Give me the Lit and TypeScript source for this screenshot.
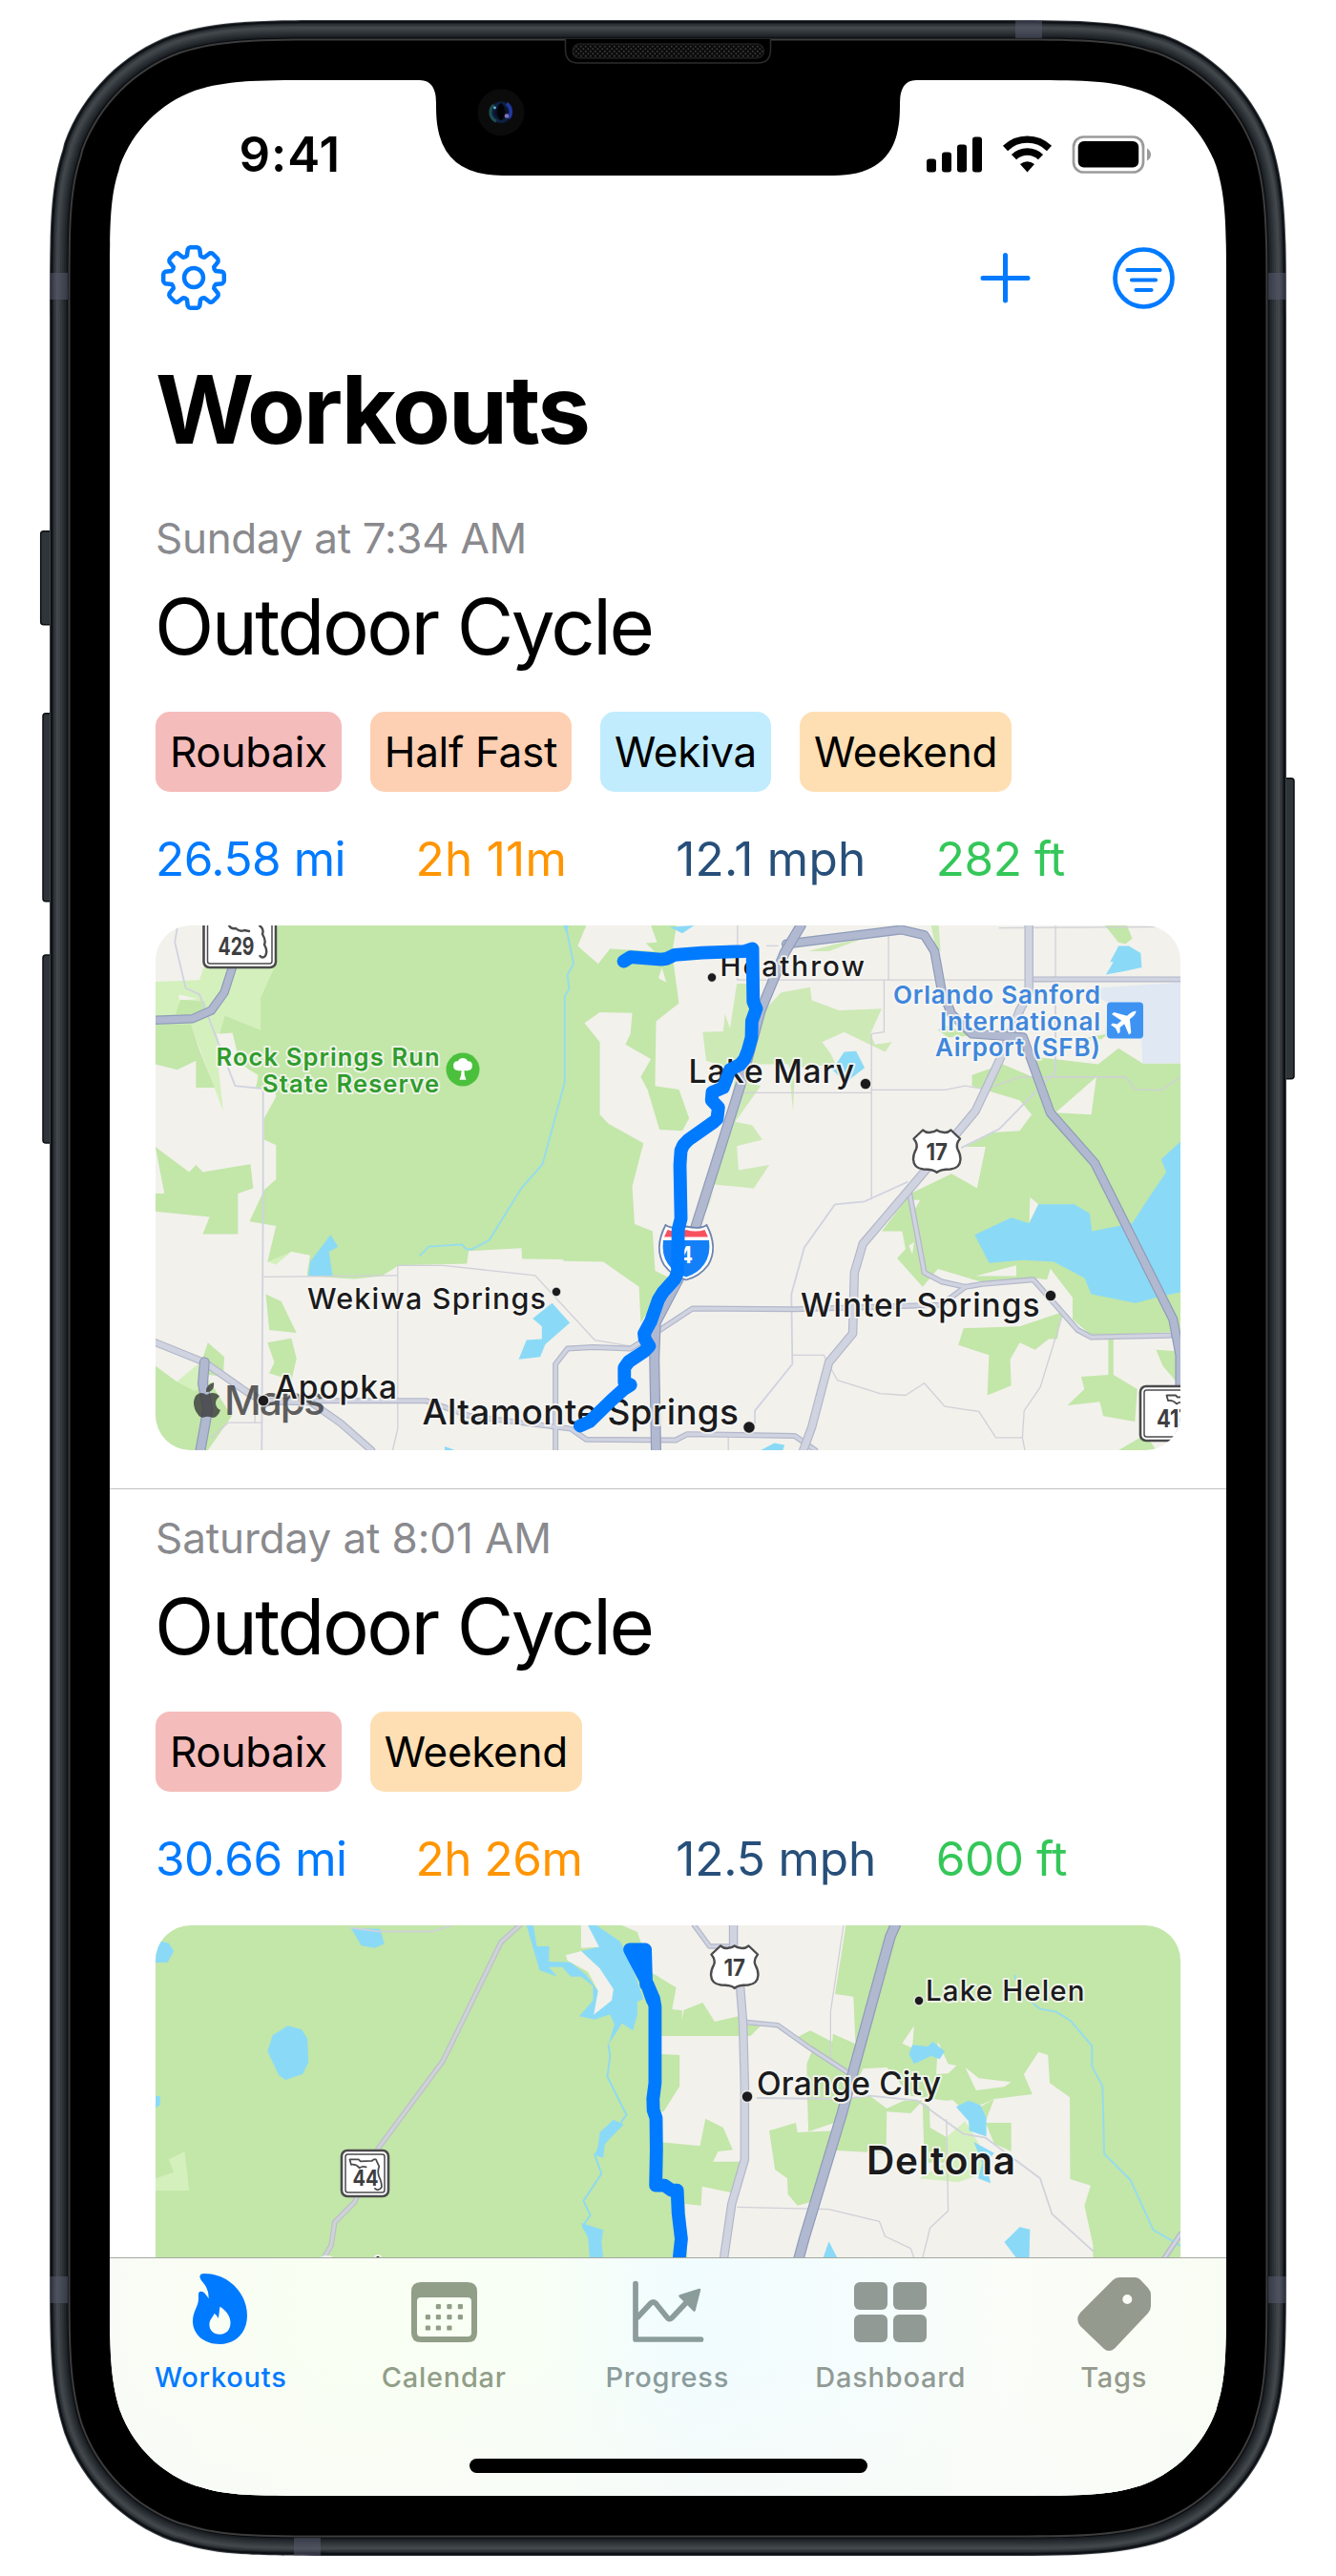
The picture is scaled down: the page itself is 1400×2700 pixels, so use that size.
import { LitElement, html, svg, css } from "lit";
import { customElement, property } from "lit/decorators.js";

/** Rounded rectangle with continuous (superelliptic) corners. */
function squircle(x: number, y: number, w: number, h: number, r: number): string {
  const k = [1.52866483, 1.08849323, 0.86840689, 0.66993427, 0.065496, 0.63149399, 0.074911, 0.37282392, 0.16905899].map((v) => v * r);
  const [a, b, c, d, e, f, g, i, j] = k;
  const X = x + w;
  const Y = y + h;
  return [
    `M${x + a} ${y}H${X - a}`,
    `C${X - b} ${y} ${X - c} ${y} ${X - d} ${y + e}L${X - f} ${y + g}`,
    `C${X - i} ${y + j} ${X - j} ${y + i} ${X - g} ${y + f}`,
    `C${X} ${y + c} ${X} ${y + b} ${X} ${y + a}V${Y - a}`,
    `C${X} ${Y - b} ${X} ${Y - c} ${X - e} ${Y - d}L${X - g} ${Y - f}`,
    `C${X - j} ${Y - i} ${X - i} ${Y - j} ${X - f} ${Y - g}`,
    `C${X - c} ${Y} ${X - b} ${Y} ${X - a} ${Y}H${x + a}`,
    `C${x + b} ${Y} ${x + c} ${Y} ${x + d} ${Y - e}L${x + f} ${Y - g}`,
    `C${x + i} ${Y - j} ${x + j} ${Y - i} ${x + g} ${Y - f}`,
    `C${x} ${Y - c} ${x} ${Y - b} ${x} ${Y - a}V${y + a}`,
    `C${x} ${y + b} ${x} ${y + c} ${x + e} ${y + d}L${x + g} ${y + f}`,
    `C${x + j} ${y + i} ${x + i} ${y + j} ${x + f} ${y + g}`,
    `C${x + c} ${y} ${x + b} ${y} ${x + a} ${y}Z`,
  ].join("");
}

const poly = (fill: string, ...shapes: string[]) =>
  shapes.map((s) => svg`<polygon points=${s} fill=${fill} />`);
const line = (color: string, width: number, ...shapes: string[]) =>
  shapes.map(
    (s) => svg`<polyline points=${s} fill="none" stroke=${color} stroke-width=${width}
      stroke-linejoin="round" stroke-linecap="round" vector-effect="non-scaling-stroke" />`,
  );
const road = (edge: string, core: string, width: number, ...shapes: string[]) => [
  line(edge, width, ...shapes),
  line(core, width - 2.4, ...shapes),
];

const GREEN = "#c3e6a9";
const LIGHT = "#d4f0bc";
const LAND = "#f2f1ec";
const WATER = "#8adaf7";
const motorway = (w: number, ...s: string[]) => road("#8f9bb9", "#b0b9d0", w, ...s);
const street = (w: number, ...s: string[]) => road("#b3b7c9", "#d0d3e0", w, ...s);
const minor = (...s: string[]) => line("#d0d0d8", 1.3, ...s);

interface Label {
  t: string; x: number; y: number; w: number; s: number; weight?: number; c?: string;
}
const label = (l: Label) => svg`<text x=${l.x} y=${l.y} font-size=${l.s} textLength=${l.w}
  font-weight=${l.weight ?? 500} fill=${l.c ?? "#1b1b1d"} class="halo">${l.t}</text>`;
const dot = (x: number, y: number, r: number) =>
  svg`<circle cx=${x} cy=${y} r=${r} fill="#1b1b1d" stroke="#f7f7f4" stroke-width="1.6" stroke-opacity=".8" />`;

const usShield = (x: number, y: number) => svg`
  <g transform="translate(${x} ${y})">
    <path d="M11 1.5Q15 4.8 19 3.8Q23 3.6 25.7 1.5Q28.5 3.6 32.5 3.8Q36.500 4.800 40.500 1.500L50 10.500Q45.500 16 47.300 21Q50.500 27 50.500 32Q50 41.500 40 42.500Q29 42.500 25.700 46Q22.500 42.500 11.500 42.500Q1.500 41.500 1 32Q1 27 4.200 21Q6 16 1.500 10.500Z"
      fill="#fff" stroke="#4b4b4d" stroke-width="2.4" stroke-linejoin="round" />
    <text x="14.500" y="32.500" font-size="24" font-weight="700" textLength="22.500" lengthAdjust="spacingAndGlyphs" fill="#3e3e40">17</text>
  </g>`;

const stateShield = (x: number, y: number, w: number, h: number) => svg`
  <rect x=${x + 1} y=${y + 1} width=${w - 2} height=${h - 2} rx="6" fill="#fff" stroke="#4b4b4d" stroke-width="2.600" />
  <rect x=${x + 5} y=${y + 5} width=${w - 10} height=${h - 10} rx="2.500" fill="none" stroke="#4b4b4d" stroke-width="1.500" />`;

const florida = (x: number, y: number, s: number) => svg`
  <path transform="translate(${x} ${y}) scale(${s})" fill="none" stroke="#4b4b4d" stroke-width="1.800" stroke-linejoin="round" stroke-linecap="round"
    d="M18 8.500Q14 7 11 9.500Q7 5 2 6L0.500 0.500H10L12 2.500L24 2Q27 -0.500 28.500 0.500L32 8Q30 12 31.500 18Q35 25 34.500 30Q31 35 27.500 31.500" />`;

const mapOne = () => html`
  <svg class="map-art" viewBox="0 0 1074 550">
    <rect width="1074" height="550" fill=${LAND} />
    <g transform="translate(-13 -20) scale(.357143 .376280)">
      ${poly(LIGHT, "36,210 165,205 185,150 380,60 420,53 420,520 330,505 262,352 225,355 215,400 235,570 140,330 36,330")}
      ${poly(LAND, "105,245 160,258 105,262", "215,355 262,350 285,440 335,470 335,505 260,500 240,420")}
      ${poly(
        GREEN,
        "395,53 1300,53 1275,110 1335,160 1370,118 1500,125 1475,102 1508,100 1490,53 1565,53 1552,130 1572,270 1505,320 1502,500 1572,510 1602,590 1582,625 1515,622 1480,510 1460,475 1490,425 1415,385 1430,355 1435,297 1340,295 1295,325 1340,378 1340,580 1365,605 1468,660 1435,780 1442,885 1495,905 1502,1015 1545,1035 1460,1160 1455,1060 1350,990 1235,988 1230,983 1112,982 1110,952 955,960 950,995 750,1000 700,1030 620,1038 480,1030 490,972 435,962 395,985 365,990 390,890 312,878 355,790 390,760 390,665 355,650 355,590 390,530 385,500 330,505 340,470 285,440 262,352 225,355 240,305 345,345 345,255 395,150",
        "36,330 140,328 165,400 210,505 155,505 155,430 100,455 36,440",
        "110,260 180,265 190,300 95,300",
        "36,670 135,740 155,720 175,740 315,718 323,785 278,800 278,913 175,913 195,865 36,850 36,800 62,800",
        "360,1080 405,1100 450,1188 370,1180",
        "365,1215 435,1203 450,1260 435,1320 370,1300 385,1270",
        "190,1215 238,1255 235,1310 160,1300",
        "36,1280 100,1325 130,1300 200,1330 260,1420 190,1515 36,1515",
      )}
      ${poly(LAND, "36,800 36,680 62,800", "480,972 435,962 395,985 360,1030 482,1030", "1512,200 1535,212 1522,170")}
      ${poly(LIGHT, "365,990 435,962 390,998", "100,1325 160,1275 200,1330 150,1350")}
      ${poly(WATER,
        "485,1030 490,990 550,915 572,948 545,962 556,1030",
        "1200,1105 1252,1160 1180,1220 1165,1255 1102,1262 1125,1208 1170,1205 1170,1170 1143,1148",
        "885,1504 915,1515 885,1515", "1233,53 1248,53 1242,75", "1545,58 1617,53 1582,75")}
      ${line("#93dcf0", 1.8, "1240,53 1263,160 1245,190 1250,230 1237,250 1237,490 1172,718 1110,785 1015,930 965,955 948,955 935,942 838,948 812,973")}
      ${line("#d0d2e0", 1.8, "100,60 93,100 125,228 165,245 270,500 352,508 352,790 348,1515")}
      ${minor("355,1032 747,1028", "747,1000 747,1455 732,1515", "747,1000 880,1000 1150,1028 1325,1208 1430,1225", "200,1480 250,1438 348,1438", "328,1380 328,1438")}
      <g transform="translate(1512 0)">
        ${poly(
          "#cde9b6",
          "230,215 290,215 262,420 240,460 140,430 130,350 190,348 195,300 210,340",
          "300,300 360,240 445,225 450,262 530,290 655,285 622,355 635,385 685,378 665,405 545,350 480,378 505,410 520,440 400,450 395,570 382,440 265,440",
          "225,480 300,500 225,600 275,610 305,650 230,668 235,735 325,720 280,785 165,775",
          "440,125 520,105 600,90 500,125", "800,53 822,53 828,125 812,110",
          "165,790 140,850 130,860",
        )}
        ${poly(
          GREEN,
          "920,470 1010,440 1110,480 1110,420 1290,440 1350,395 1420,437 1532,437 1532,1185 1270,1195 1215,1150 1215,1090 1150,1010 1140,1040 1100,1035 960,1050 820,1010 775,1060 700,980 725,955 715,905 655,905 740,800 860,745 935,785 960,670 900,670 980,630 1060,625 1095,580 1060,540 920,500",
          "895,1175 1060,1170 1185,1130 1170,1205 1145,1205 1105,1235 1060,1215 1032,1262 1035,1335 965,1362 970,1250 880,1222",
          "1320,1205 1335,1205 1335,1305 1405,1345 1398,1435 1305,1420 1295,1380 1200,1390 1250,1345 1240,1310 1320,1305",
          "1460,1235 1532,1240 1520,1325 1480,1280", "1350,1515 1430,1470 1460,1515",
          "1310,53 1375,53 1390,90 1370,105 1350,100", "1230,370 1320,355 1300,370",
          "840,330 920,360 850,365 820,345",
        )}
        ${poly("#dfe8f3", "1250,230 1532,212 1532,437 1420,437 1418,370 1310,360 1320,270")}
        ${poly(LAND, "1165,575 1285,475 1270,580", "1090,810 1115,830 1088,880", "930,1030 1050,1000 1050,1030", "735,818 768,818 755,840", "735,945 750,935 745,970", "1150,1010 1215,1090 1215,1150 1160,1100")}
        ${poly(
          WATER,
          "928,915 1035,867 1088,883 1115,830 1220,830 1265,855 1272,905 1390,883 1440,810 1490,740 1475,705 1532,655 1532,1075 1480,1085 1400,1105 1270,1080 1250,1035 1160,990 1070,985 970,993",
          "1313,190 1335,155 1325,155 1350,110 1380,110 1415,130 1418,170 1370,180",
          "510,455 545,405 580,403 605,450 550,490", "300,1515 340,1495 370,1500 365,1515",
        )}
        ${minor(
          "232,53 232,205 1080,205", "675,80 675,205", "662,205 662,350 625,355 625,815", "240,519 625,519",
          "625,511 840,511 900,500 960,510 1060,475 1370,475 1400,510 1475,512 1532,475",
          "393,1250 485,1250 525,1320 650,1357 725,1362 780,1328 840,1393 940,1407 990,1480 1068,1480",
          "1185,1140 1120,1340 1073,1405 1068,1480 1075,1515", "1000,60 1532,57", "1165,53 1165,200", "205,1480 205,1515",
          "318,110 350,110",
        )}
        ${line("#d0d2e0", 1.8, "730,768 605,822 518,830 428,950 390,1080 393,1275 283,1405 283,1440", "1165,205 1165,460 1000,620 890,672")}
        ${street(6, "-302,1515 -302,1275 -267,1232 -192,1228 -82,1232 -20,1195 100,1120 400,1122 830,1110 900,1060", "1095,203 1532,203",
          "735,790 780,1020 830,1045 900,1060 950,1052 1100,1040 1230,1180 1270,1200 1500,1195",
          "-1030,1377 -682,1377 -552,1420 -302,1450 -257,1455 -212,1485 50,1487 85,1470 400,1475 460,1515")}
        ${street(9.5, "1060,290 1000,430 930,570 860,650 600,940 575,1020 570,1190 500,1270 450,1450 425,1515", "1087,53 1087,240 1060,290")}
        ${motorway(10, "375,105 712,65 780,80 810,125 830,230 860,300 920,355 1070,365 1150,575 1280,715 1510,1150 1530,1250 1530,1500")}
        ${motorway(11, "418,53 370,130 300,290 240,500 110,890 75,1010 -8,1160 -12,1260 -7,1515")}
      </g>
      ${street(8, "36,1215 180,1270 300,1350 350,1378 490,1380 580,1440 670,1515")}
      ${motorway(9.500, "36,317 145,313 200,290 238,240 265,160")}
      ${motorway(11, "168,1515 190,1400 175,1330 180,1270")}
    </g>

    ${stateShield(49.5, -20, 77.500, 65)}
    <path d="M77 0Q79 4 84 3Q88 7 93 5L98 6M109 0Q114 4 112 9Q116 16 114 20Q118 27 115 32Q112 35 109.500 32" fill="none" stroke="#4b4b4d" stroke-width="2.400" stroke-linecap="round" />
    <text x="65.500" y="31" font-size="26" font-weight="700" textLength="38" lengthAdjust="spacingAndGlyphs" fill="#3e3e40">429</text>
    ${stateShield(1031, 482, 80, 59)}
    ${florida(1059, 492, 1)}
    <text x="1049" y="526" font-size="26" font-weight="700" textLength="36" lengthAdjust="spacingAndGlyphs" fill="#3e3e40">417</text>
    ${usShield(793, 213)}
    <path d="M534.500 314Q541 319 556 315.500Q571 319 577.500 314Q590 338 579 356Q570 368 556 371.500Q542 368 533 356Q522 338 534.500 314Z" fill="#fff" stroke="#6f84ad" stroke-width="1.800" />
    <path d="M536.500 319Q546 322 556 319Q566 322 575.500 319L579 326.500H533Z" fill="#f9505f" />
    <path d="M532 330H580Q582 345 575 355Q568 365 556 368.500Q544 365 537 355Q530 345 532 330Z" fill="#1480f8" />
    <text x="548.500" y="353.500" font-size="24" font-weight="700" textLength="14.500" lengthAdjust="spacingAndGlyphs" fill="#fff">4</text>

    ${label({ t: "Rock Springs Run", x: 63.500, y: 147, w: 234, s: 25.5, weight: 600, c: "#2f9c2c" })}
    ${label({ t: "State Reserve", x: 112, y: 174.5, w: 185, s: 25.5, weight: 600, c: "#2f9c2c" })}
    <circle cx="322" cy="151" r="17.500" fill="#4bc03c" />
    <path d="M322 139a5.500 4.500 0 0 1 5 3.200a4.300 4.300 0 0 1 4.800 5.300a3.800 3.800 0 0 1-3.800 4.200a5 5 0 0 1-4.500 0q-.3 5.500 2 10h-7q2.300-4.500 2-10a5 5 0 0 1-4.500 0a3.800 3.800 0 0 1-3.800-4.200a4.300 4.300 0 0 1 4.800-5.300a5.500 4.500 0 0 1 5-3.200z" fill="#fff" />
    ${label({ t: "Wekiwa Springs", x: 159, y: 402, w: 250, s: 30.5 })}
    ${dot(420, 384, 5)}
    <g fill="#3c3c3c" fill-opacity=".82">
      <path d="M61 479q1 5-2.500 8.500q-2.500 2-5.500 1.500q-.5-4 2.500-7q2.500-2.600 5.500-3zM53.500 492q3.500-2.500 7-2q4.500.5 6.500 3.800q-4 2.700-4 7.200q.3 5 5 7q-1.500 4.200-4.500 6.800q-2.300 1.800-5 .7q-4-1.600-8 0q-2.700.8-5-1.400q-6-7-5.500-15q1-8.500 8-9.100q2.800 0 5.500 2z" />
      <text x="72" y="512.500" font-size="42.500" font-weight="500" textLength="106">Maps</text>
    </g>
    ${label({ t: "Apopka", x: 125, y: 496, w: 128, s: 33.5 })}
    ${dot(113, 498, 6)}
    ${label({ t: "Altamonte Springs", x: 279.500, y: 523, w: 331.500, s: 37 })}
    ${dot(622, 526, 6.5)}
    ${label({ t: "Heathrow", x: 591.500, y: 53, w: 151.500, s: 29.5 })}
    ${dot(583, 54.5, 5)}
    ${label({ t: "Lake Mary", x: 558.500, y: 165, w: 173.500, s: 33.5 })}
    ${dot(744, 166, 6)}
    ${label({ t: "Winter Springs", x: 676, y: 409.500, w: 250.500, s: 33.5 })}
    ${dot(938, 388, 6)}
    ${label({ t: "Orlando Sanford", x: 773, y: 82, w: 217, s: 26, weight: 600, c: "#3f87dc" })}
    ${label({ t: "International", x: 822, y: 109.500, w: 168, s: 26, weight: 600, c: "#3f87dc" })}
    ${label({ t: "Airport (SFB)", x: 817, y: 137, w: 173, s: 26, weight: 600, c: "#3f87dc" })}
    <rect x="997" y="80.500" width="38" height="38" rx="4" fill="#3e93f2" />
    <path transform="translate(1016 99.500) rotate(50)" fill="#fff" d="M0-15Q2.300-13 2.300-8V-4.500L14 3.500V6.500L2.300 3V9L6 12V14.500L0 13L-6 14.500V12L-2.300 9V3L-14 6.500V3.500L-2.300-4.500V-8Q-2.300-13 0-15Z" />

    <g transform="translate(-13 -20) scale(.357143 .376280)">
      ${line("#007aff", 13.8, "1410,153 1430,141 1520,148 1535,146 1560,135 1640,129 1765,125 1788,118 1790,265 1799,285 1786,320 1785,365 1775,400 1765,425 1752,440 1722,455 1702,505 1670,518 1668,540 1688,560 1684,592 1675,600 1600,650 1585,665 1578,680 1575,720 1578,870 1570,900 1568,1020 1560,1038 1525,1075 1512,1095 1490,1155 1470,1190 1472,1205 1485,1225 1470,1240 1425,1268 1412,1285 1412,1325 1430,1333 1410,1345 1375,1375 1310,1435 1282,1447")}
    </g>
  </svg>
`;

const mapTwo = () => html`
  <svg class="map-art" viewBox="0 0 1074 550">
    <rect width="1074" height="550" fill=${GREEN} />
    <g transform="translate(-13 -18) scale(.357143 .333333)">
      ${poly(LIGHT, "75,790 122,765 135,888 36,888 36,850 90,830")}
      ${poly(WATER,
        "610,62 695,65 708,112 680,125 640,118", "36,100 75,110 90,135 72,170 36,172",
        "380,400 425,370 465,382 482,410 485,485 468,522 418,540 398,525 365,450", "36,590 50,592 50,618 36,628",
        "1125,54 1145,54 1155,120 1192,120 1190,168 1255,170 1300,210 1335,260 1330,300 1380,330 1325,350 1280,340 1320,290 1320,245 1285,215 1255,215 1230,185 1190,185 1215,215 1163,195",
        "1305,54 1330,54 1400,105 1440,200 1468,285 1450,295 1450,335 1437,385 1405,362 1365,430 1383,365 1365,325 1335,320 1340,190 1285,135 1335,122",
        "1380,665 1410,680 1355,740 1350,785 1328,778 1335,745 1340,705",
        "1285,990 1350,1012 1345,1050 1350,1100 1310,1100 1305,1030")}
      ${poly(LAND, "1240,148 1285,135 1340,190 1380,255 1375,290 1322,335 1335,260 1305,200 1245,165", "1285,54 1305,54 1338,122 1285,125")}
      ${line("#8adaf7", 1.8, "1365,430 1370,465 1362,530 1418,650 1385,700 1325,775 1345,835 1292,920 1312,965 1290,1000 1310,1040 1340,1100")}
      ${line("#d0d0dc", 1.6, "610,62 690,73 850,73 900,56")}
      ${road("#bcc1c6", "#cfd2d8", 5.6, "1105,54 1050,107 880,480 690,755 620,925 562,988 552,1060 530,1100")}
      <g transform="translate(1512 0)">
        ${poly(LAND, "-107,54 550,54 518,270 572,278 578,425 575,520 600,505 680,500 740,560 860,600 900,640 985,600 1097,585 1072,523 1115,452 1143,462 1148,550 1207,595 1208,852 1268,872 1250,935 1275,1060 1275,1100 0,1100 0,215 -20,205 -62,75")}
        ${poly(
          GREEN,
          "-17,205 52,250 40,318 70,322 68,350 75,320 130,297 165,357 235,340 300,370 270,402 0,402", "0,458 62,462 62,560 15,640 0,640",
          "0,735 122,748 138,662 190,690 218,760 175,765 160,797 240,797 215,895 128,875 125,935 78,930 85,1100 0,1100",
          "445,385 510,420 512,395 575,425 600,505 530,670 440,703 437,600 435,490 450,450 400,410",
          "325,700 403,675 408,705 520,700 460,920 408,935 380,900 378,850 342,822",
          "555,600 620,590 670,630 720,605 775,605 740,645 670,640 668,770 520,762",
          "775,610 795,625 797,690 845,720 845,800 780,800", "960,675 1035,675 1035,765 985,740",
          "985,600 960,670 935,630", "670,500 760,480 870,500 980,590 845,605 740,590",
        )}
        ${poly(LIGHT, "845,720 900,670 940,740 960,830 880,862 765,850 845,800")}
        ${poly(LAND, "750,370 745,440 715,425", "820,420 850,490 875,495 850,520 815,522", "900,500 940,535 1035,547 1015,562 932,573")}
        ${poly(WATER,
          "735,460 745,430 790,435 805,420 840,450 825,475 800,465 750,490",
          "873,625 910,605 945,620 962,660 962,718 912,700 910,670", "925,735 985,770 960,800 975,865 938,850 950,800",
          "1015,1050 1060,1003 1090,1010 1088,1100 1050,1100", "483,1100 500,1048 525,1100")}
        ${line("#93dcf0", 1.8, "1045,212 1048,222", "1100,300 1120,317 1165,325 1210,355 1272,433 1272,497 1303,560 1308,773 1385,855 1452,1012 1532,1062")}
        ${minor("232,940 500,947 648,985 665,1032 740,1070 750,1100", "543,54 505,325 505,470", "845,665 850,952 797,1005 775,1100")}
        ${line("#d0d2dc", 1.8, "290,597 540,600 620,590 760,605 895,710 960,722 1120,850 1155,962 1275,1078")}
        ${street(5.6, "105,54 150,120 215,120", "250,358 350,368 445,440 560,520", "1532,1025 1485,1100")}
        ${street(9.5, "220,54 220,120 240,250 248,360 253,560 253,790 215,930 192,1100")}
        ${motorway(11.5, "695,54 680,90 575,500 540,640 430,1030 412,1100")}
      </g>
    </g>

    ${stateShield(194, 235, 51, 50)}
    ${florida(203, 245, 0.98)}
    <text x="206.500" y="273" font-size="23" font-weight="700" textLength="27" lengthAdjust="spacingAndGlyphs" fill="#3e3e40">44</text>
    ${usShield(581, 20)}
    ${label({ t: "Lake Helen", x: 807, y: 79, w: 166.500, s: 29.5 })}
    ${dot(800, 79, 5)}
    ${label({ t: "Orange City", x: 630, y: 177.500, w: 193, s: 33.5 })}
    ${dot(620, 179.5, 6)}
    ${label({ t: "Deltona", x: 745, y: 261, w: 156, s: 40.5, weight: 600 })}
    ${label({ t: "Cassia", x: 168, y: 368.500, w: 83, s: 29 })}

    <g transform="translate(-13 -18) scale(.357143 .333333)">
      <polygon points="1425,128 1475,128 1476,250 1495,300" fill="#007aff" />
      ${line("#007aff", 13.8, "1495,290 1472,220 1428,130 1473,130 1476,240", "1480,240 1498,285 1502,310 1502,550 1496,600 1497,635 1505,660 1506,760 1504,872 1530,872 1550,887 1567,887 1570,960 1579,1040 1572,1110")}
    </g>
  </svg>
`;

interface Tag { text: string; color: string; }
interface Workout { when: string; name: string; tags: Tag[]; stats: string[]; map: () => unknown; }

const ROUBAIX: Tag = { text: "Roubaix", color: "#f5bcbc" };
const WEEKEND: Tag = { text: "Weekend", color: "#fedfb3" };

const WORKOUTS: Workout[] = [
  {
    when: "Sunday at 7:34 AM",
    name: "Outdoor Cycle",
    tags: [ROUBAIX, { text: "Half Fast", color: "#fdd0b3" }, { text: "Wekiva", color: "#c1ecfe" }, WEEKEND],
    stats: ["26.58 mi", "2h 11m", "12.1 mph", "282 ft"],
    map: mapOne,
  },
  {
    when: "Saturday at 8:01 AM",
    name: "Outdoor Cycle",
    tags: [ROUBAIX, WEEKEND],
    stats: ["30.66 mi", "2h 26m", "12.5 mph", "600 ft"],
    map: mapTwo,
  },
];

const tracking = (text: string, base: number, perOne: number) =>
  `${(base + perOne * (text.split("1").length - 1)).toFixed(2)}px`;

@customElement("workout-row")
export class WorkoutRow extends LitElement {
  @property({ attribute: false }) workout!: Workout;

  static styles = css`
    :host { display: block; height: 1047px; padding: 0 48px; border-bottom: 1px solid #c0c0c2; }
    .when { padding-top: 21px; font-size: 44px; line-height: 60px; color: #8a8a8e; white-space: nowrap; }
    .name { margin-left: -1px; font-size: 81.500px; line-height: 125px; letter-spacing: -2.600px; white-space: nowrap; }
    .tags { display: flex; gap: 30px; margin-top: 27px; }
    .tag { height: 84px; line-height: 84px; padding: 0 15px; border-radius: 15px; font-size: 44px; letter-spacing: -0.300px; white-space: nowrap; }
    .stats { display: grid; grid-template-columns: repeat(4, 272.600px); height: 140px; line-height: 140px; font-size: 49.500px; }
    .stat { white-space: nowrap; }
    .stat:nth-child(1) { color: #007aff; }
    .stat:nth-child(2) { color: #ff9500; }
    .stat:nth-child(3) { color: #274f7a; }
    .stat:nth-child(4) { color: #34c759; }
    .map { height: 550px; width: 1074px; border-radius: 37px; overflow: hidden; }
    .map-art { display: block; width: 1074px; height: 550px; font-family: Inter, "Liberation Sans", sans-serif; }
    .halo { paint-order: stroke; stroke: #f7f7f4; stroke-width: 4px; stroke-opacity: 0.85; stroke-linejoin: round; }
  `;

  render() {
    const w = this.workout;
    return html`
      <div class="when" style="letter-spacing:${tracking(w.when, -0.3, 0.2)}">${w.when}</div>
      <div class="name">${w.name}</div>
      <div class="tags">
        ${w.tags.map((t) => html`<span class="tag" style="background:${t.color}">${t.text}</span>`)}
      </div>
      <div class="stats">${w.stats.map((s) => html`<span class="stat" style="letter-spacing:${tracking(s, -0.45, 0.35)}">${s}</span>`)}</div>
      <div class="map">${w.map()}</div>
    `;
  }
}

const TABS = [
  {
    label: "Workouts", color: "#007aff",
    icon: svg`<path fill="currentColor" fill-rule="evenodd" d="M27.500 20C27 17 29 16 32 16C58 16 77 37 77 60C77 78 65 90 48.500 90C31 90 20 79 20 66C20 55 26 51 26 42C26 38 25.500 36 27.500 35C31 34 34 38 36.600 42.300C37 32 32 27 28.500 22.500ZM48.500 50.700C54 54 59.500 60 59.500 67.500C59.500 75 55 79.700 48.500 79.700C41.500 79.700 37.400 75 37.400 69.500C37.400 64 41 62 42.500 58C44.500 59 45.500 60.500 46.500 63C48 59 47.500 55 48.500 50.700Z"/>`,
  },
  {
    label: "Calendar", color: "#919e88",
    icon: svg`<path fill="currentColor" fill-rule="evenodd" d="M25 25H74Q84 25 84 35V78Q84 88 74 88H25Q15 88 15 78V35Q15 25 25 25ZM25 41Q21 41 21 45V78Q21 82 25 82H74Q78 82 78 78V45Q78 41 74 41Z"/>
      ${[[43.4, 50.7], [54.9, 50.7], [66.4, 50.7], [32.4, 61.700], [43.4, 61.700], [54.9, 61.700], [66.4, 61.700], [32.4, 73], [43.4, 73], [54.9, 73]].map(
        ([x, y]) => svg`<rect x=${x - 2.6} y=${y - 2.6} width="5.200" height="5.200" rx="1.200" fill="currentColor"/>`)}`,
  },
  {
    label: "Progress", color: "#8b9c9b",
    icon: svg`<path d="M16 26.500V85H84.500M18 62L32 47Q34.500 45 37 47L49.500 62.500Q51.500 65 54 62.500L71 44.500" fill="none" stroke="currentColor" stroke-width="5.700" stroke-linecap="round" stroke-linejoin="round"/>
      <path d="M83 33L62.500 39.500L77.500 54.500Z" fill="currentColor" stroke="currentColor" stroke-width="2.500" stroke-linejoin="round"/>`,
  },
  {
    label: "Dashboard", color: "#919a95",
    icon: svg`${[[11, 25], [52, 25], [11, 59], [52, 59]].map(([x, y]) => svg`<rect x=${x} y=${y} width="35" height="29" rx="6" fill="currentColor"/>`)}`,
  },
  {
    label: "Tags", color: "#949a8d",
    icon: svg`<path fill="currentColor" fill-rule="evenodd" d="M55 20H71Q75 20 77.500 23L85 31Q88 34.500 88 38V50Q88 54 85 57.500L50 94.500Q44 99.500 38.500 94.500L14 71Q8.500 64 14 57L48 23Q51 20 55 20ZM63.300 38A5 5 0 1 0 63.300 48A5 5 0 1 0 63.300 38Z"/>`,
  },
];

@customElement("tab-bar")
export class TabBar extends LitElement {
  static styles = css`
    :host {
      display: flex; flex-direction: column; align-items: center; justify-content: space-between;
      height: 249px; border-top: 1px solid #a3a9a0;
      background: linear-gradient(180deg, rgba(248, 250, 248, 0) 40%, rgba(248, 251, 247, 0.7) 100%),
        linear-gradient(90deg, #f9fcf6 0%, #f9fff2 20%, #f8fff5 38%, #f1fcff 52%, #f5fdfd 68%, #fafdf8 80%, #f8fdf4 100%);
    }
    .tabs { display: grid; grid-template-columns: repeat(5, 1fr); width: 100%; }
    .tab { display: flex; flex-direction: column; align-items: center; }
    .icon { width: 100px; height: 100px; }
    .label { margin-left: -1.500px; font-size: 29px; line-height: 49px; font-weight: 500; letter-spacing: 0.750px; }
    .home { width: 417px; height: 15px; border-radius: 8px; background: #000; margin-bottom: 24px; }
  `;

  render() {
    return html`
      <div class="tabs">
        ${TABS.map((t) => html`
          <div class="tab" style="color:${t.color}">
            <svg class="icon" viewBox="0 0 100 100">${t.icon}</svg>
            <span class="label">${t.label}</span>
          </div>`)}
      </div>
      <div class="home"></div>
    `;
  }
}

/** Shades of the metal band, from the outer edge inward: [inset, colour]. */
const BAND: [number, string][] = [
  [0, "#3c4146"], [1, "#0d1115"], [3, "#1c2126"], [4, "#2c3136"], [5.5, "#383d42"], [7, "#43484d"], [9, "#3d4247"],
  [11, "#34393e"], [13, "#2b3035"], [15, "#22272c"], [17, "#191d22"], [18.5, "#07090b"], [19.5, "#3c3c3d"], [21.5, "#000000"],
];

const gearPath = (() => {
  const pts: string[] = [];
  for (let i = 0; i < 8; i++) {
    const a = (i * Math.PI) / 4 - Math.PI / 2;
    const p = (r: number, d: number) => `${(35 + r * Math.cos(a + d)).toFixed(2)} ${(35 + r * Math.sin(a + d)).toFixed(2)}`;
    pts.push(`${i ? "L" : "M"}${p(24, -0.300)}L${p(30.5, -0.205)}Q${p(32, -0.170)} ${p(32, -0.110)}L${p(32, 0.110)}Q${p(32, 0.170)} ${p(30.5, 0.205)}L${p(24, 0.300)}Q${p(22.8, 0.393)} ${p(24, 0.485)}`);
  }
  return pts.join("") + "Z";
})();

@customElement("app-root")
export class AppRoot extends LitElement {
  static styles = css`
    :host { display: block; width: 1400px; height: 2700px; background: #fff; overflow: hidden; font-family: Inter, "Liberation Sans", sans-serif; color: #000; }
    .stage { display: grid; width: 1400px; height: 2700px; }
    .frame, .screen, .overlay { grid-area: 1 / 1; }
    .overlay { position: relative; z-index: 2; }
    .screen { display: grid; grid-template-rows: 2532px; width: 1170px; height: 2532px; margin: 84px 0 0 115px; overflow: hidden; background: #fff; }
    .content, .dock { grid-area: 1 / 1; min-width: 0; }
    .dock { align-self: end; position: relative; z-index: 1; }
    .status { display: flex; height: 155px; align-items: center; justify-content: space-between; padding: 0 77px 0 135.500px; }
    .time { font-size: 51px; font-weight: 600; letter-spacing: 0.900px; line-height: 60px; }
    .signals { width: 238px; height: 44px; }
    .nav { display: flex; height: 104px; align-items: center; padding: 0 51px 0 53px; }
    .gear { width: 70px; height: 70px; }
    .plus { width: 60px; height: 60px; margin-left: auto; }
    .filter { width: 70px; height: 70px; margin-left: 80px; }
    .title { margin: 0; height: 170px; padding-left: 48px; font-size: 99.500px; line-height: 172px; font-weight: 700; letter-spacing: -2.200px; }
  `;

  render() {
    const clip = squircle(0, 0, 1170, 2532, 142);
    return html`
      <div class="stage">
        <svg class="frame" width="1400" height="2700" viewBox="0 0 1400 2700">
          <g fill="#30353a" stroke="#0b0e12" stroke-width="1.500">
            <rect x="42.700" y="556.700" width="14" height="98" rx="3" />
            <rect x="45" y="747.700" width="14" height="197" rx="3" />
            <rect x="45" y="1001" width="14" height="197" rx="3" />
            <rect x="1343" y="815.700" width="13" height="315" rx="3" />
          </g>
          ${BAND.map(([d, c]) => svg`<path d=${squircle(52 + d, 21 + d, 1296 - 2 * d, 2658 - 2 * d, 204 - d)} fill=${c} />`)}
          <g fill="#5a5c70" fill-opacity=".5">
            <rect x="52" y="286" width="19" height="28" /><rect x="52" y="2386" width="19" height="28" />
            <rect x="1329" y="286" width="19" height="28" /><rect x="1329" y="2386" width="19" height="28" />
            <rect x="1064" y="21" width="28" height="19" /><rect x="308" y="2660" width="28" height="19" />
          </g>
        </svg>

        <div class="screen" style="clip-path:path('${clip}')">
          <div class="content">
            <div class="status">
              <span class="time">9:41</span>
              <svg class="signals" viewBox="0 0 238 44">
                <rect x="1" y="26.500" width="10" height="14" rx="3" /><rect x="17" y="19.500" width="10" height="21" rx="3" />
                <rect x="33" y="11.500" width="10" height="29" rx="3" /><rect x="49" y="3.500" width="10" height="37" rx="3" />
                <g fill="none" stroke="#000" stroke-width="7.400">
                  <path d="M83.500 15.500A33 33 0 0 1 129.500 15.500" /><path d="M92.500 24.700A20 20 0 0 1 120.500 24.700" />
                </g>
                <path d="M106.500 40.500L99 32Q106.500 26.500 114 32Z" />
                <rect x="155" y="3.500" width="73" height="37" rx="10.500" fill="none" stroke="#9b9b9b" stroke-width="2.700" />
                <rect x="159.700" y="8" width="63.500" height="27.500" rx="6" />
                <path d="M232 15.500Q236 18 236 22Q236 26 232 28.500Z" fill="#9b9b9b" />
              </svg>
            </div>
            <div class="nav">
              <svg class="gear" viewBox="0 0 70 70" fill="none" stroke="#007aff" stroke-width="4.500" stroke-linejoin="round">
                <path d=${gearPath} /><circle cx="35" cy="35" r="10" />
              </svg>
              <svg class="plus" viewBox="0 0 60 60" stroke="#007aff" stroke-width="5" stroke-linecap="round"><path d="M29.500 6.500V54M6 30.500H53" /></svg>
              <svg class="filter" viewBox="0 0 70 70" fill="none" stroke="#007aff" stroke-linecap="round">
                <circle cx="34.500" cy="35.500" r="30" stroke-width="4.700" />
                <path d="M17.500 27H51.500M22 37.500H47M26.500 48H42.500" stroke-width="4.200" />
              </svg>
            </div>
            <h1 class="title">Workouts</h1>
            ${WORKOUTS.map((w) => html`<workout-row .workout=${w}></workout-row>`)}
          </div>
          <tab-bar class="dock"></tab-bar>
        </div>

        <svg class="overlay" width="1400" height="2700" viewBox="0 0 1400 2700">
          <defs>
            <pattern id="mesh" width="5" height="5" patternUnits="userSpaceOnUse">
              <rect width="5" height="5" fill="#0a0a0a" /><circle cx="1.300" cy="1.300" r="1" fill="#3a3a3c" /><circle cx="3.800" cy="3.800" r="1" fill="#3a3a3c" />
            </pattern>
            <radialGradient id="lens"><stop offset="0" stop-color="#020308" /><stop offset=".5" stop-color="#081226" /><stop offset=".8" stop-color="#10234c" /><stop offset="1" stop-color="#0b0f18" /></radialGradient>
          </defs>
          <path d="M440 80V84Q457 84 457 108C457 122 457.500 130 460.500 142Q472 184 527 184H873Q928 184 939.500 142C942.500 130 943 122 943 108Q943 84 960 84V80Z" />
          <path d="M592.500 41V52Q592.500 66 606 66H794Q807.500 66 807.500 52V41" fill="#000" stroke="#2c2c2d" stroke-width="1.500" />
          <rect x="600" y="46" width="200.500" height="15" rx="7.500" fill="url(#mesh)" stroke="#1d1d1e" stroke-width="1.500" />
          <circle cx="525" cy="117.700" r="24.500" fill="#0b0b0c" />
          <circle cx="525" cy="117.700" r="12" fill="url(#lens)" />
          <path d="M517.500 110A10 10 0 0 0 520 127" fill="none" stroke="#1a4f4e" stroke-width="3" />
          <path d="M531 108.500A11 11 0 0 1 533 124" fill="none" stroke="#2038a0" stroke-width="3.500" />
          <ellipse cx="525" cy="117" rx="3.500" ry="9" fill="#020204" />
          <circle cx="531" cy="121.500" r="2.300" fill="#8672ba" /><circle cx="518.500" cy="113" r="1.400" fill="#6fb7d8" />
        </svg>
      </div>
    `;
  }
}
